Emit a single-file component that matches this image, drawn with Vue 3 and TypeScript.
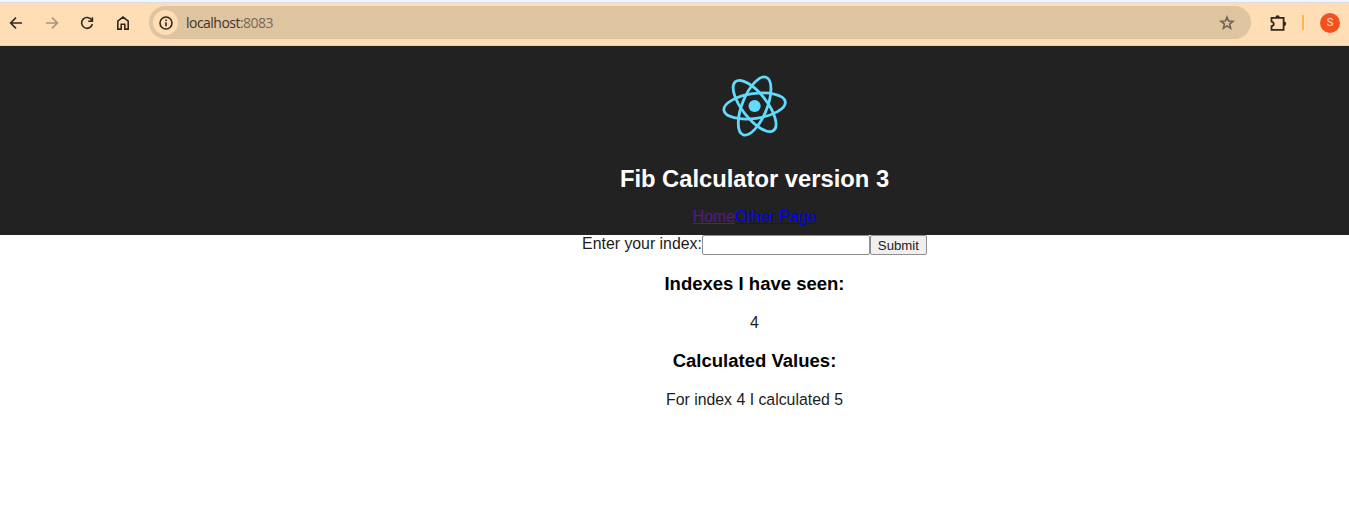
<script setup lang="ts">
import { ref } from 'vue'

const index = ref('')
const seenIndexes: number[] = [4]
const values: Record<string, number> = { '4': 5 }
const orbits: number[] = [-8, 52, 112]
</script>

<template>
  <div class="window">
    <div class="toolbar">
      <nav class="controls">
        <svg class="icon" viewBox="0 0 16 16"><path d="M14 8H2.7M8 2.6 2.6 8 8 13.4" /></svg>
        <svg class="icon muted" viewBox="0 0 16 16"><path d="M2 8h11.3M8 2.6 13.4 8 8 13.4" /></svg>
        <svg class="icon" viewBox="0 0 16 16"><path d="M12.7 5.2A5.4 5.4 0 1 0 13.3 9M13.4 2.2V6.3H9.2" /></svg>
        <svg class="icon" viewBox="0 0 16 16"><path d="M2.8 6.2 8 2.1l5.2 4.1v7.9H9.8V9.3H6.2v4.8H2.8Z" /></svg>
      </nav>
      <div class="address">
        <span class="info">
          <svg viewBox="0 0 16 16"><circle cx="8" cy="8" r="6" /><path d="M8 7.3v3.9M8 4.6v1.5" /></svg>
        </span>
        <span class="url">localhost<span class="port">:8083</span></span>
        <svg class="star" viewBox="0 0 16 16"><path d="m8 2 1.6 4.1 4.4.2-3.4 2.8 1.1 4.2L8 10.9l-3.7 2.4 1.1-4.2L2 6.3l4.4-.2Z" /></svg>
      </div>
      <svg class="puzzle" viewBox="0 0 18 18">
        <path d="M2.5 3.9h12.1v11.9H2.5v-3.6q2.3-.4 2.3-2.2T2.5 7.6Z" />
        <path class="solid" d="M6.4 3.5a2.2 2.2 0 0 1 4.4 0ZM15 7.6a2.2 2.2 0 0 1 0 4.4Z" />
      </svg>
      <span class="divider"></span>
      <span class="avatar">S</span>
    </div>

    <div class="page">
      <header class="header">
        <svg class="logo" viewBox="-39.6 -40 80 80">
          <circle r="6.1" />
          <ellipse v-for="angle in orbits" :key="angle" rx="31" ry="12.4" :transform="`rotate(${angle})`" />
        </svg>
        <h1>Fib Calculator version 3</h1>
        <div class="links"><a class="visited" href="#">Home</a><a href="#">Other Page</a></div>
      </header>
      <form class="form" @submit.prevent>
        <label for="index">Enter your index:</label>
        <input id="index" v-model="index" type="text" />
        <button>Submit</button>
      </form>
      <h3>Indexes I have seen:</h3>
      <div class="result">{{ seenIndexes.join(', ') }}</div>
      <h3>Calculated Values:</h3>
      <div v-for="(value, key) in values" :key="key" class="result">For index {{ key }} I calculated {{ value }}</div>
    </div>
  </div>
</template>

<style scoped>
.window {
  width: 100%;
  height: 506px;
  overflow: hidden;
  background: #fff;
  font-family: "Liberation Sans", Arial, sans-serif;
  font-size: 15.85px;
  color: #1c1c1c;
}
.toolbar {
  box-sizing: border-box;
  height: 46px;
  border-top: 2px solid #f3f5fb;
  border-bottom: 1px solid #efcfa7;
  box-shadow: inset 0 1px #d9dde3;
  background: #ffdeb5;
  display: flex;
  align-items: center;
  padding: 0 9px 2px 8px;
}
.controls {
  display: flex;
  gap: 19.6px;
  width: 141px;
}
svg {
  fill: none;
  stroke: #33291f;
  stroke-width: 1.6;
  flex: none;
}
.icon {
  width: 16px;
  height: 16px;
}
.muted {
  stroke: #a8947b;
}
.address {
  width: 1102px;
  height: 33px;
  box-sizing: border-box;
  border-radius: 17px;
  background: #dfc4a0;
  display: flex;
  align-items: center;
  padding: 0 16px 0 4px;
}
.info {
  width: 25px;
  height: 25px;
  border-radius: 50%;
  background: #ffdeb5;
  display: flex;
  align-items: center;
  justify-content: center;
}
.info svg {
  width: 16px;
  height: 16px;
}
.url {
  flex: 1;
  margin-left: 8px;
  font: 14px "Open Sans", sans-serif;
  letter-spacing: -0.53px;
  color: #40362b;
}
.port {
  color: #79695a;
}
.star {
  width: 16px;
  height: 16px;
  stroke: #6c6256;
  stroke-width: 1.5;
}
.puzzle {
  width: 18px;
  height: 18px;
  margin-left: 18px;
  stroke-width: 1.8;
}
.puzzle .solid {
  fill: #33291f;
  stroke: none;
}
.divider {
  width: 2px;
  height: 15px;
  margin-left: 15px;
  background: #ffb453;
}
.avatar {
  width: 20px;
  height: 20px;
  margin-left: 16px;
  border-radius: 50%;
  background: #f4511e;
  color: #fde4d8;
  font: 11px/20px Roboto, sans-serif;
  text-align: center;
  flex: none;
}
.page {
  width: 1509px;
  text-align: center;
}
.header {
  height: 189px;
  box-sizing: border-box;
  padding-top: 20px;
  background: #222;
}
.logo {
  display: block;
  width: 80px;
  height: 80px;
  margin: 0 auto;
  stroke: #61dafb;
  stroke-width: 2.8;
}
.logo circle {
  fill: #61dafb;
  stroke: none;
}
h1 {
  margin: 19px 0 15px;
  font-size: 23.75px;
  line-height: 28px;
  color: #fff;
}
.links {
  line-height: 18px;
}
a {
  color: #0000ee;
  text-decoration-skip-ink: none;
}
.visited {
  color: #551a8b;
}
.form {
  display: flex;
  justify-content: center;
  height: 20px;
}
label {
  line-height: 18px;
}
input {
  box-sizing: border-box;
  width: 168px;
  height: 20px;
  padding: 0 2px;
  border: 1px solid #8f8f8f;
  border-radius: 2px;
  background: #fff;
}
button {
  box-sizing: border-box;
  width: 57px;
  height: 20px;
  padding: 0;
  border: 1px solid #8f8f8f;
  border-radius: 2px;
  background: #efefef;
  font: 13.2px/17px "Liberation Sans", Arial, sans-serif;
  color: #1c1c1c;
}
h3 {
  margin: 18px 0 19px;
  font-size: 18.52px;
  line-height: 22px;
  color: #000;
}
.result {
  line-height: 18px;
}
</style>
